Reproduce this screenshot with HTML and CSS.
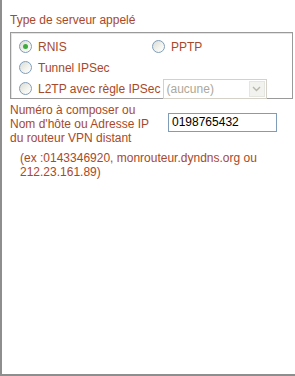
FILE: index.html
```html
<html>
	<head>
		<title>Serveur appelé</title>
		<meta charset="utf-8">
		<link rel="stylesheet" href="styles.css">
	</head>
	<body>
		<div class="page">
			<div class="group-title">Type de serveur appelé</div>
			<div class="server-box">
				<div class="server-row">
					<span class="choice choice-first"><span class="radio checked"></span>RNIS</span>
					<span class="choice"><span class="radio"></span>PPTP</span>
				</div>
				<div class="server-row">
					<span class="choice"><span class="radio"></span>Tunnel IPSec</span>
				</div>
				<div class="server-row">
					<span class="choice"><span class="radio"></span>L2TP avec règle IPSec</span>
					<span class="select-box">
						<span class="select-text">(aucune)</span>
						<span class="select-button">
							<svg width="9" height="6" viewBox="0 0 9 6"><path d="M1 1 L4.5 4.5 L8 1" fill="none" stroke="#b9b7ab" stroke-width="1.4"/></svg>
						</span>
					</span>
				</div>
			</div>
			<div class="address-row">
				<div class="address-label">Numéro à composer ou<br>Nom d'hôte ou Adresse IP<br>du routeur VPN distant</div>
				<div class="address-input">0198765432</div>
			</div>
			<div class="address-hint">(ex :0143346920, monrouteur.dyndns.org ou<br>212.23.161.89)</div>
		</div>
	</body>
</html>
```

FILE: styles.css
```css
body {
    margin: 0;
    background-color: #ffffff;
}

div.page {
    width: 295px;
    height: 376px;
    box-sizing: border-box;
    border-left: 2px solid #8e8e8e;
    border-bottom: 2px solid #8e8e8e;
    padding-left: 8px;
    padding-right: 2px;
    font-family: "Liberation Sans", Arial, sans-serif;
    font-size: 12px;
    line-height: 14px;
    color: #a8492a;
}

div.group-title {
    padding-top: 13px;
    height: 14px;
    margin-bottom: 5px;
}

div.server-box {
    border: 1px solid #9a9a9a;
    box-shadow: inset 1px 1px 0 #e4e4e4;
    height: 67px;
    box-sizing: border-box;
    padding: 3px 0 0 8px;
}

div.server-row {
    display: flex;
    align-items: center;
    height: 21px;
}

span.choice {
    display: flex;
    align-items: center;
}

span.choice-first {
    width: 133px;
}

span.radio {
    width: 11px;
    height: 11px;
    border: 1px solid #7f9db9;
    border-radius: 50%;
    background: linear-gradient(135deg, #dcdcd6 0%, #f4f4f0 60%, #ffffff 100%);
    margin-right: 6px;
    position: relative;
}

span.radio.checked::after {
    content: "";
    position: absolute;
    left: 3px;
    top: 3px;
    width: 5px;
    height: 5px;
    border-radius: 50%;
    background: #3cad3c;
}

span.select-box {
    display: flex;
    align-items: center;
    width: 104px;
    height: 20px;
    box-sizing: border-box;
    border: 1px solid #d4d2c8;
    margin-left: 2px;
    background: #ffffff;
}

span.select-text {
    flex: 1;
    color: #aca899;
    padding-left: 3px;
}

span.select-button {
    width: 16px;
    height: 16px;
    margin-right: 1px;
    background: #f2f2ee;
    border: 1px solid #e6e6e0;
    box-sizing: border-box;
    display: flex;
    align-items: center;
    justify-content: center;
}

div.address-row {
    display: flex;
    margin-top: 4px;
}

div.address-label {
    width: 158px;
}

div.address-input {
    width: 109px;
    height: 19px;
    box-sizing: border-box;
    margin-top: 10px;
    border: 1px solid #7f9db9;
    color: #000000;
    padding-left: 3px;
    line-height: 17px;
}

div.address-hint {
    margin-top: 6px;
    padding-left: 10px;
}
```
